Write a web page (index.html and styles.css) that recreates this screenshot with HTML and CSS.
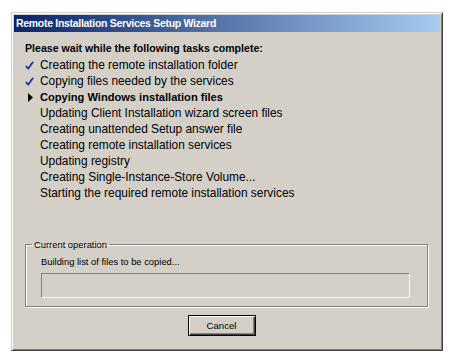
FILE: index.html
```html
<!DOCTYPE html>
<html lang="en">
<head>
  <meta charset="UTF-8">
  <title>Remote Installation Services Setup Wizard</title>
  <link rel="stylesheet" href="styles.css">
</head>
<body>

  <div class="window">
    <div class="titlebar">Remote Installation Services Setup Wizard</div>

    <div class="content">
      <div class="heading">Please wait while the following tasks complete:</div>

      <ul class="tasks">
        <li class="done"><span class="mark"><svg width="9" height="9" viewBox="0 0 9 9"><path d="M0.8 5 L3.2 7.6 L8.2 0.8" fill="none" stroke="#1c2fa0" stroke-width="1.7"/></svg></span>Creating the remote installation folder</li>
        <li class="done"><span class="mark"><svg width="9" height="9" viewBox="0 0 9 9"><path d="M0.8 5 L3.2 7.6 L8.2 0.8" fill="none" stroke="#1c2fa0" stroke-width="1.7"/></svg></span>Copying files needed by the services</li>
        <li class="current"><span class="mark"><svg width="5" height="9" viewBox="0 0 5 9"><path d="M0 0 L5 4.5 L0 9 Z" fill="#000"/></svg></span>Copying Windows installation files</li>
        <li><span class="mark"></span>Updating Client Installation wizard screen files</li>
        <li><span class="mark"></span>Creating unattended Setup answer file</li>
        <li><span class="mark"></span>Creating remote installation services</li>
        <li><span class="mark"></span>Updating registry</li>
        <li><span class="mark"></span>Creating Single-Instance-Store Volume...</li>
        <li><span class="mark"></span>Starting the required remote installation services</li>
      </ul>

      <fieldset class="group">
        <legend>Current operation</legend>
        <div class="group-body">
          <div class="op">Building list of files to be copied...</div>
          <div class="progress"></div>
        </div>
      </fieldset>

      <div class="buttons">
        <button class="btn">Cancel</button>
      </div>
    </div>
  </div>

</body>
</html>
```

FILE: styles.css
```css
body {
  margin: 0;
  background-color: #ffffff;
  font-family: 'Liberation Sans', Arial, sans-serif;
}

.window {
  margin: 12px 0 0 11px;
  width: 432px;
  height: 339px;
  box-sizing: border-box;
  background-color: #d4d0c8;
  border-top: 1px solid #d4d0c8;
  border-left: 1px solid #d4d0c8;
  border-right: 1px solid #404040;
  border-bottom: 1px solid #404040;
  box-shadow: inset 1px 1px 0 #ffffff, inset -1px -1px 0 #808080;
  padding: 2px;
}

.titlebar {
  height: 17px;
  line-height: 17px;
  padding-left: 2px;
  color: #ffffff;
  font-size: 10.5px;
  font-weight: bold;
  letter-spacing: -0.3px;
  background: linear-gradient(to right, #0a246a, #a6caf0);
}

.content {
  padding: 8px 0 0 11px;
}

.heading {
  font-size: 10.6px;
  font-weight: bold;
  height: 16px;
  line-height: 16px;
  margin-bottom: 1px;
}

.tasks {
  list-style: none;
  margin: 0;
  padding: 0;
}

.tasks li {
  display: flex;
  align-items: center;
  height: 16px;
  font-size: 11.9px;
  color: #000;
}

.mark {
  width: 15px;
  box-sizing: border-box;
  flex: none;
  display: flex;
  padding-left: 0;
}

.tasks li.current {
  font-size: 11.1px;
  font-weight: bold;
}

.tasks li.current .mark {
  padding-left: 3px;
}

.group {
  margin: 38px 0 0 0;
  width: 403px;
  box-sizing: border-box;
  padding: 0 0 8px 0;
  border: 1px solid #808080;
  box-shadow: 1px 1px 0 #ffffff, inset 1px 1px 0 #ffffff;
}

.group legend {
  font-size: 9.4px;
  line-height: 11px;
  padding: 0 2px;
  margin-left: 6px;
}

.group-body {
  padding-left: 15px;
}

.op {
  font-size: 9.4px;
  line-height: 12px;
  margin-top: 6px;
}

.progress {
  margin-top: 5px;
  width: 369px;
  height: 25px;
  box-sizing: border-box;
  border-top: 1px solid #808080;
  border-left: 1px solid #808080;
  border-right: 1px solid #ffffff;
  border-bottom: 1px solid #ffffff;
}

.buttons {
  display: flex;
  justify-content: center;
  margin-top: 8px;
  padding-right: 22px;
}

.btn {
  width: 68px;
  height: 21px;
  font-family: 'Liberation Sans', Arial, sans-serif;
  font-size: 9.6px;
  color: #000;
  background-color: #d4d0c8;
  border: 1px solid #000;
  box-shadow: inset 1px 1px 0 #ffffff, inset -1px -1px 0 #404040, inset -2px -2px 0 #808080;
  padding: 0;
}
```
